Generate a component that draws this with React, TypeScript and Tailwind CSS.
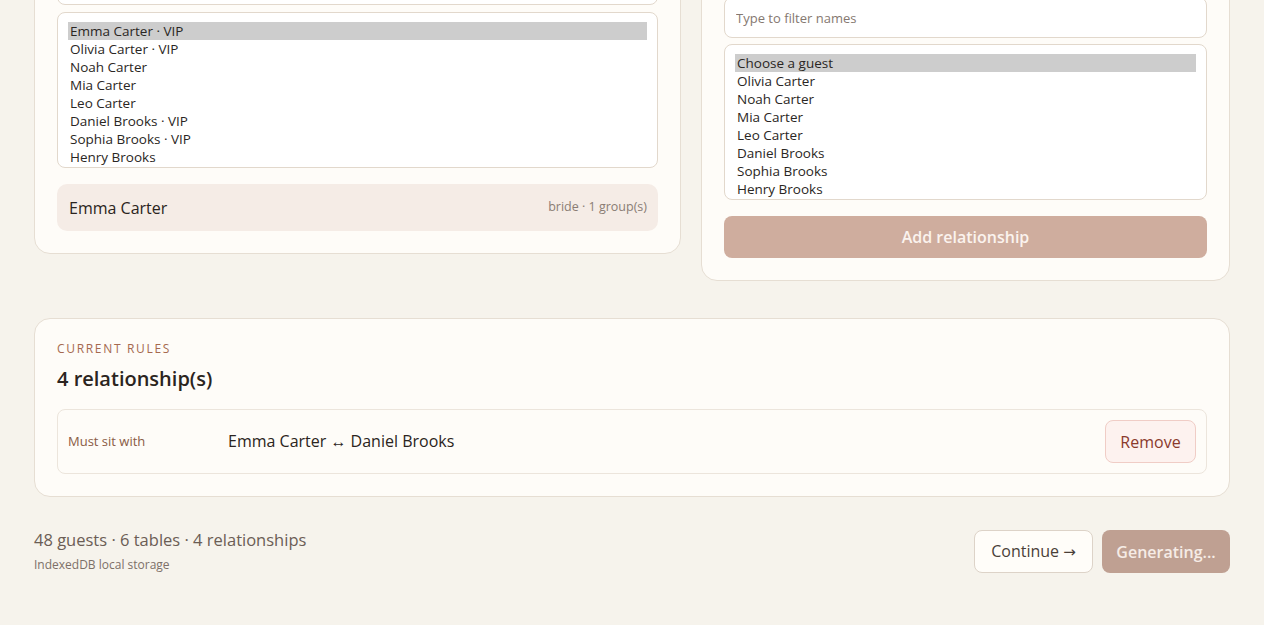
import React from "react";

const leftGuests = [
  "Emma Carter · VIP",
  "Olivia Carter · VIP",
  "Noah Carter",
  "Mia Carter",
  "Leo Carter",
  "Daniel Brooks · VIP",
  "Sophia Brooks · VIP",
  "Henry Brooks",
];

const rightGuests = [
  "Choose a guest",
  "Olivia Carter",
  "Noah Carter",
  "Mia Carter",
  "Leo Carter",
  "Daniel Brooks",
  "Sophia Brooks",
  "Henry Brooks",
];

function GuestList({ items, itemClass }: { items: string[]; itemClass: string }) {
  return (
    <div
      role="listbox"
      className="h-[156px] overflow-hidden rounded-[8px] border border-[#e2d8cc] bg-white px-[10px] py-[9px]"
    >
      {items.map((g, i) => (
        <div
          key={g}
          role="option"
          aria-selected={i === 0}
          className={`h-[18px] px-[2px] leading-[18px] text-[#2a2623] ${itemClass} ${
            i === 0 ? "bg-[#cdcdcd]" : ""
          }`}
        >
          {g}
        </div>
      ))}
    </div>
  );
}

export default function App() {
  return (
    <div
      className="min-h-[625px] overflow-hidden bg-[#f6f3ec] text-[#2b2420]"
      style={{ fontFamily: '"Open Sans", "Noto Sans", sans-serif' }}
    >
      <div className="px-[34px] pb-[52px]">
        {/* guest picker + relationship form (page is scrolled past their headers) */}
        <div className="-mt-[151px] grid grid-cols-[647px_1fr] items-start gap-[20px]">
          <section className="flex flex-col rounded-[16px] border border-[#e6ded3] bg-[#fefcf8] px-[22px] pb-[22px] pt-[22px]">
            <div aria-hidden="true" className="h-[77px]" />
            <input
              aria-label="Search guests"
              className="mt-[16px] h-[40px] rounded-[8px] border border-[#e2d8cc] bg-white px-[11px] text-[13px] outline-none"
            />
            <div className="mt-[7px]">
              <GuestList items={leftGuests} itemClass="text-[13.5px]" />
            </div>
            <div className="mt-[16px] flex h-[47px] items-center justify-between rounded-[10px] bg-[#f5ece6] pl-[12px] pr-[11px]">
              <span className="text-[16px] text-[#2b2420]">Emma Carter</span>
              <span className="text-[12.5px] text-[#8a7d74]">bride · 1 group(s)</span>
            </div>
          </section>

          <section className="flex flex-col rounded-[16px] border border-[#e6ded3] bg-[#fefcf8] px-[22px] pb-[22px] pt-[22px]">
            <div aria-hidden="true" className="h-[109px]" />
            <input
              className="mt-[16px] h-[41px] rounded-[8px] border border-[#e2d8cc] bg-white px-[11px] text-[13px] text-[#2b2420] outline-none placeholder:text-[#857870]"
              placeholder="Type to filter names"
            />
            <div className="mt-[6px]">
              <GuestList items={rightGuests} itemClass="text-[13.5px]" />
            </div>
            <button className="mt-[16px] h-[42px] rounded-[8px] bg-[#cfad9e] text-[16px] font-semibold text-[#fbf3ee]">
              Add relationship
            </button>
          </section>
        </div>

        {/* current rules */}
        <section className="mt-[37px] rounded-[16px] border border-[#e6ded3] bg-[#fefcf8] px-[22px] pb-[22px] pt-[22px]">
          <p className="text-[12px] uppercase leading-[16px] tracking-[0.14em] text-[#a5694f]">Current rules</p>
          <h2 className="mt-[8px] text-[20px] font-semibold leading-[28px] text-[#2b2420]">4 relationship(s)</h2>
          <div className="mt-[16px] flex h-[65px] items-center rounded-[8px] border border-[#ece5dc] bg-[#fefcf8] pl-[10px] pr-[10px]">
            <span className="w-[160px] text-[13px] font-medium text-[#8a5b45]">Must sit with</span>
            <span className="flex-1 pb-[1px] text-[16px] text-[#2b2420]">Emma Carter ↔ Daniel Brooks</span>
            <button className="h-[43px] w-[91px] rounded-[8px] border border-[#f0cdc6] bg-[#fdf2ef] text-[16px] text-[#8a3a2c]">
              Remove
            </button>
          </div>
        </section>

        {/* footer summary + actions */}
        <div className="mt-[33px] flex items-center justify-between">
          <div>
            <p className="text-[16.5px] leading-[20px] text-[#6b5d55]">48 guests · 6 tables · 4 relationships</p>
            <p className="mt-[7px] text-[12px] leading-[16px] text-[#7d7068]">IndexedDB local storage</p>
          </div>
          <div className="flex gap-[9px]">
            <button className="h-[43px] w-[119px] rounded-[8px] border border-[#ddd3c8] bg-[#fffdf9] text-[16px] text-[#4a3f38]">
              Continue <span style={{ fontFamily: '"DejaVu Sans", sans-serif' }} className="text-[15px]">→</span>
            </button>
            <button className="h-[43px] w-[128px] rounded-[8px] bg-[#bfa092] text-[16px] font-semibold text-[#f6ece6]">
              Generating...
            </button>
          </div>
        </div>
      </div>
    </div>
  );
}
